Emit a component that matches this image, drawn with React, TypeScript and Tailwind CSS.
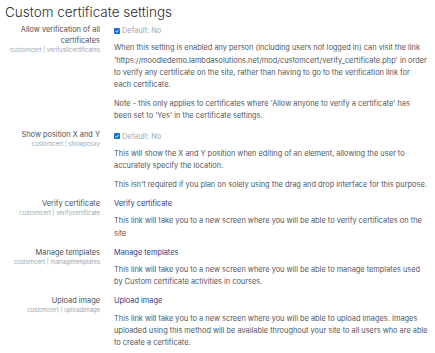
function Check() {
  return (
    <svg width="6" height="6" viewBox="0 0 12 12" className="shrink-0">
      <rect x="0" y="0" width="12" height="12" rx="2" fill="#1a6fd6" />
      <path d="M3 6.3 L5.2 8.5 L9.2 3.6" stroke="#fff" strokeWidth="1.8" fill="none" />
    </svg>
  );
}

function Setting({
  label,
  name,
  top,
  checkbox = false,
  children,
}: {
  label: string;
  name: string;
  top?: string;
  checkbox?: boolean;
  children: React.ReactNode;
}) {
  return (
    <div className="mb-[6.85px] grid grid-cols-[100px_1fr] gap-x-[14px]">
      <div className="text-right">
        <div className="text-[7.4px] leading-[11px] text-[#4a4f55]">{label}</div>
        <div className="text-[5.9px] leading-[8px] text-[#a0a5aa]">{name}</div>
      </div>
      <div>
        {checkbox ? (
          <div className="flex items-center gap-[2px] pt-[1.5px] text-[7.4px] leading-[11px] text-[#a3a8ad]">
            <Check />
            <span>Default: No</span>
          </div>
        ) : (
          <div className="text-[7.4px] leading-[11px] text-[#2f3c7e]">{top}</div>
        )}
        <div className="mt-[6.35px]">{children}</div>
      </div>
    </div>
  );
}

function P({ children, last = false }: { children: React.ReactNode; last?: boolean }) {
  return (
    <p className={`text-[7.4px] leading-[12.3px] text-[#51565c] ${last ? "" : "mb-[6.2px]"}`}>
      {children}
    </p>
  );
}

export default function App() {
  return (
    <div
      className="h-[353px] w-[435px] overflow-hidden bg-white pr-[7px]"
      style={{ fontFamily: "Inter, Roboto, sans-serif" }}
    >
      <h2 className="pl-[5px] pt-[3px] text-[13.5px] font-light leading-[18px] text-[#2a2f34]">
        Custom certificate settings
      </h2>
      <div className="mt-[2.5px]">
        <Setting
          label="Allow verification of all certificates"
          name="customcert | verifyallcertificates"
          checkbox
        >
          <P>
            When this setting is enabled any person (including users not logged in) can visit the link
            'https://moodledemo.lambdasolutions.net/mod/customcert/verify_certificate.php' in order to
            verify any certificate on the site, rather than having to go to the verification link for
            each certificate.
          </P>
          <P last>
            Note - this only applies to certificates where 'Allow anyone to verify a certificate' has
            been set to 'Yes' in the certificate settings.
          </P>
        </Setting>
        <Setting label="Show position X and Y" name="customcert | showposxy" checkbox>
          <P>
            This will show the X and Y position when editing of an element, allowing the user to
            accurately specify the location.
          </P>
          <P last>
            This isn't required if you plan on solely using the drag and drop interface for this
            purpose.
          </P>
        </Setting>
        <Setting label="Verify certificate" name="customcert | verifycertificate" top="Verify certificate">
          <P last>
            This link will take you to a new screen where you will be able to verify certificates on
            the site
          </P>
        </Setting>
        <Setting label="Manage templates" name="customcert | managetemplates" top="Manage templates">
          <P last>
            This link will take you to a new screen where you will be able to manage templates used by
            Custom certificate activities in courses.
          </P>
        </Setting>
        <Setting label="Upload image" name="customcert | uploadimage" top="Upload image">
          <P last>
            This link will take you to a new screen where you will be able to upload images. Images
            uploaded using this method will be available throughout your site to all users who are
            able to create a certificate.
          </P>
        </Setting>
      </div>
    </div>
  );
}
